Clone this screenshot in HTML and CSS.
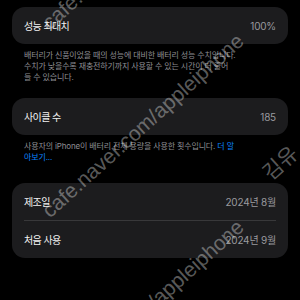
FILE: index.html
```html
<!DOCTYPE html>
<html lang="ko">
<head>
<meta charset="utf-8">
<link rel="stylesheet" href="styles.css">
</head>
<body>
<div class="screen">
  <section class="group">
    <div class="card">
      <div class="row"><span class="label">성능 최대치</span><span class="value">100%</span></div>
    </div>
    <p class="footer"><span class="line">배터리가 신품이었을 때의 성능에 대비한 배터리 성능 수치입니다.</span><span class="line">수치가 낮을수록 재충전하기까지 사용할 수 있는 시간이 더 줄어</span><span class="line">들 수 있습니다.</span></p>
  </section>
  <section class="group">
    <div class="card">
      <div class="row"><span class="label">사이클 수</span><span class="value">185</span></div>
    </div>
    <p class="footer"><span class="line">사용자의 iPhone이 배터리 전체 용량을 사용한 횟수입니다. <span class="link">더 알</span></span><span class="line"><span class="link">아보기...</span></span></p>
  </section>
  <section class="group group--dates">
    <div class="card">
      <div class="row"><span class="label">제조일</span><span class="value">2024년 8월</span></div>
      <div class="divider"></div>
      <div class="row"><span class="label">처음 사용</span><span class="value">2024년 9월</span></div>
    </div>
  </section>

  <span class="wm wm--a">cafe.naver.com/appleiphone</span>
  <span class="wm wm--b">cafe.naver.com/appleiphone</span>
  <span class="wm wm--c">cafe.naver.com/appleiphone</span>
  <span class="wm wm--ko">김유</span>
</div>
</body>
</html>
```
FILE: styles.css
```css
html, body {
  margin: 0;
  padding: 0;
  background: #000;
}
.screen {
  position: relative;
  width: 300px;
  height: 300px;
  overflow: hidden;
  box-sizing: border-box;
  padding: 7px 12px 0;
  font-family: "Inter", "Noto Sans CJK KR", sans-serif;
  display: flex;
  flex-direction: column;
}
.group {
  display: flex;
  flex-direction: column;
  margin-bottom: 15.5px;
}
.group--dates {
  margin-top: 5px;
}
.card {
  background: #1c1c1e;
  border-radius: 13px;
  display: flex;
  flex-direction: column;
}
.row {
  height: 37px;
  padding: 0 12px;
  display: flex;
  align-items: center;
  justify-content: space-between;
  font-size: 10px;
}
.label {
  color: #f2f2f2;
  letter-spacing: -0.6px;
}
.value {
  color: #9a9a9f;
  letter-spacing: -0.2px;
}
.divider {
  height: 1px;
  margin: 0 12px;
  background: #38383a;
}
.footer {
  margin: 0;
  padding: 5.5px 12px 0;
  font-size: 8px;
  line-height: 11px;
  color: #8e8e93;
  letter-spacing: -0.15px;
}
.line {
  display: block;
  white-space: nowrap;
}
.link {
  color: #0a84ff;
}
.wm {
  position: absolute;
  left: 52px;
  font-family: "Liberation Sans", sans-serif;
  font-size: 21px;
  line-height: 21px;
  color: rgba(255, 255, 255, 0.36);
  white-space: nowrap;
  transform-origin: 0 100%;
  transform: rotate(-42deg);
  pointer-events: none;
}
.wm--a { top: 12px; }
.wm--b { top: 200px; }
.wm--c { top: 386px; }
.wm--ko {
  left: 272px;
  top: 162px;
  font-family: "Noto Sans CJK KR", sans-serif;
}
```
